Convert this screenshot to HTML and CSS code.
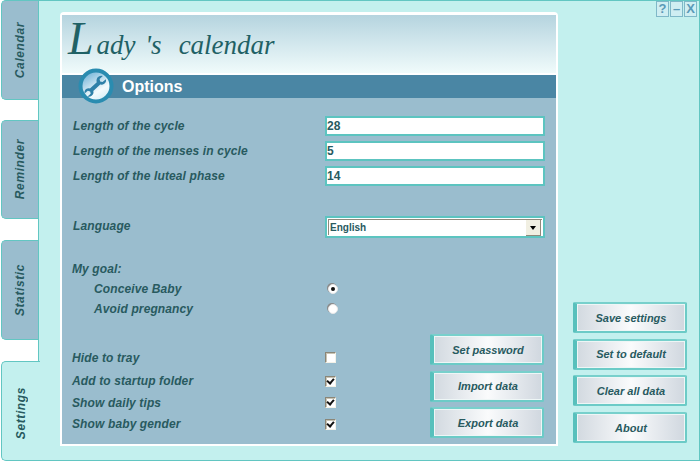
FILE: index.html
```html
<!DOCTYPE html>
<html lang="en">
<head>
    <meta charset="UTF-8">
    <title>Lady's calendar - Options</title>
    <link rel="stylesheet" href="styles.css">
</head>
<body>

<div class="window">
    <div class="tabs">
        <div class="tab"><span>Calendar</span></div>
        <div class="tab"><span>Reminder</span></div>
        <div class="tab"><span>Statistic</span></div>
        <div class="tab active"><span>Settings</span></div>
    </div>

    <div class="main">
        <div class="panel">
            <div class="logo"><span class="logo-cap">L</span>ady <span class="logo-s">'s</span><span class="logo-word">calendar</span></div>
            <div class="bar">
                <svg class="bar-icon" width="36" height="36" viewBox="0 0 36 36">
                    <defs>
                        <linearGradient id="disc" x1="0.1" y1="0" x2="0.7" y2="1">
                            <stop offset="0" stop-color="#5fa9d2"/>
                            <stop offset="0.7" stop-color="#f4fbfd"/>
                            <stop offset="1" stop-color="#d4edf6"/>
                        </linearGradient>
                    </defs>
                    <circle cx="18" cy="18" r="15.5" fill="url(#disc)" stroke="#2a8cb0" stroke-width="4"/>
                    <path transform="translate(3.500 4) scale(.84)" d="M29 8.500l-4 3.500-2.800-.8-.7-2.800 3.800-3.600c-3.200-.8-6.500 1-7.300 4-.3 1.200-.2 2.300 .2 3.300l-8.200 7.600c-2.800-.8-5.600 .7-6.300 3.300-.2 .9-.2 1.700 0 2.500l3.800-3.200 2.800 .8 .6 2.700-3.700 3.400c3 .8 6-.8 6.900-3.500 .3-1.100 .3-2.100-.1-3.100l8.300-7.700c3 .7 6-.9 6.800-3.700 .2-.9 .2-1.800-.1-2.700z" fill="#2f80a8"/>
                </svg>
                <span class="bar-title">Options</span>
            </div>

            <div class="form">
                <div class="field">
                    <label>Length of the cycle</label>
                    <input class="text-input" type="text" value="28">
                </div>
                <div class="field">
                    <label>Length of the menses in cycle</label>
                    <input class="text-input" type="text" value="5">
                </div>
                <div class="field">
                    <label>Length of the luteal phase</label>
                    <input class="text-input" type="text" value="14">
                </div>

                <div class="field language">
                    <label>Language</label>
                    <div class="select">
                        <div class="select-inner">
                            <span>English</span>
                            <span class="select-btn"></span>
                        </div>
                    </div>
                </div>

                <div class="goal">
                    <div class="goal-title">My goal:</div>
                    <div class="goal-row">
                        <label>Conceive Baby</label>
                        <span class="radio on"></span>
                    </div>
                    <div class="goal-row">
                        <label>Avoid pregnancy</label>
                        <span class="radio"></span>
                    </div>
                </div>

                <div class="lower">
                    <div class="checks">
                        <div class="check-row"><label>Hide to tray</label><span class="check"></span></div>
                        <div class="check-row second"><label>Add to startup folder</label><span class="check on"></span></div>
                        <div class="check-row"><label>Show daily tips</label><span class="check on"></span></div>
                        <div class="check-row"><label>Show baby gender</label><span class="check on"></span></div>
                    </div>
                    <div class="btn-stack">
                        <button class="btn">Set password</button>
                        <button class="btn">Import data</button>
                        <button class="btn">Export data</button>
                    </div>
                </div>
            </div>
        </div>

        <div class="side">
            <div class="win-btns">
                <span class="win-btn">?</span>
                <span class="win-btn">&#8211;</span>
                <span class="win-btn">X</span>
            </div>
            <div class="btn-stack">
                <button class="btn">Save settings</button>
                <button class="btn">Set to default</button>
                <button class="btn">Clear all data</button>
                <button class="btn">About</button>
            </div>
        </div>
    </div>
</div>

</body>
</html>
```

FILE: styles.css
```css
body {
    margin: 0;
    font-family: "Liberation Sans", Arial, sans-serif;
    font-size: 12px;
    font-weight: bold;
    font-style: italic;
    color: #285a5f;
    background-color: #fff;
}
.window {
    display: flex;
    width: 700px;
    height: 461px;
    overflow: hidden;
}

/* left tabs */
.tabs {
    width: 38px;
    display: flex;
    flex-direction: column;
    gap: 20px;
    flex: none;
}
.tab {
    height: 100px;
    margin-left: 1px;
    box-sizing: border-box;
    display: flex;
    align-items: center;
    justify-content: center;
    background-color: #9abdce;
    border: 1px solid #62c6c2;
    border-right: none;
    border-radius: 5px 0 0 5px;
    letter-spacing: 0.6px;
}
.tab:nth-child(2) {
    height: 99px;
    margin-bottom: 1px;
}
.tab:nth-child(3) {
    margin-bottom: 1px;
}
.tab span {
    writing-mode: vertical-rl;
    transform: rotate(180deg);
}
.tab.active {
    position: relative;
    margin-right: -2px;
    padding-top: 4px;
    background-color: #c3f0ee;
    z-index: 1;
}

/* main area */
.main {
    flex: 1;
    display: flex;
    box-sizing: border-box;
    padding: 11px 0 14px 21px;
    background-color: #c3f0ee;
    border: 1px solid #62c6c2;
}
.panel {
    width: 498px;
    box-sizing: border-box;
    flex: none;
    border: 2px solid #fff;
    border-top-width: 3px;
    border-radius: 4px 4px 0 0;
    background-color: #9abdce;
    display: flex;
    flex-direction: column;
}
.logo {
    height: 58px;
    padding-left: 6px;
    font-family: "Liberation Serif", serif;
    font-size: 27px;
    font-weight: normal;
    line-height: 60px;
    color: #1f6165;
    background: linear-gradient(#b5d4df, #f0fbfb);
    border-bottom: 2px solid #fff;
}
.logo-cap {
    font-size: 46px;
    line-height: 0;
    margin-right: 3px;
}
.logo-s {
    margin-left: 3px;
}
.logo-word {
    margin-left: 17px;
}
.bar {
    height: 23px;
    display: flex;
    align-items: center;
    background-color: #4a86a4;
    padding-left: 16px;
    gap: 8px;
}
.bar-icon {
    margin: -7px 0 -5px 0;
}
.bar-title {
    color: #fff;
    font-size: 16px;
    font-style: normal;
}

/* form */
.form {
    flex: 1;
    padding: 15px 12px 0 11px;
    letter-spacing: 0.12px;
}
.field {
    display: grid;
    grid-template-columns: 252px 220px;
    align-items: center;
    height: 25px;
}
.text-input {
    width: 100%;
    height: 20px;
    box-sizing: border-box;
    margin: 0;
    padding: 0;
    border: 2px solid #5cc4c0;
    background-color: #fff;
    font-family: "Liberation Sans", Arial, sans-serif;
    font-size: 12px;
    font-weight: bold;
    color: #285a5f;
    outline: none;
}
.language {
    margin-top: 28px;
    height: 22px;
}
.language label {
    margin-top: -2px;
}
.select {
    box-sizing: border-box;
    height: 22px;
    border: 2px solid #5cc4c0;
    background-color: #fff;
    padding: 1px;
    font-style: normal;
    font-size: 10px;
    letter-spacing: 0;
}
.select-inner {
    height: 100%;
    box-sizing: border-box;
    display: flex;
    align-items: center;
    justify-content: space-between;
    padding-left: 1px;
    border-top: 1px solid #8f8a7c;
    border-left: 1px solid #8f8a7c;
}
.select-btn {
    width: 14px;
    height: 15px;
    margin-right: 1px;
    position: relative;
    background-color: #f1efe2;
    border-right: 1px solid #8f8a7c;
    border-bottom: 1px solid #8f8a7c;
}
.select-btn::after {
    content: "";
    position: absolute;
    left: 4px;
    top: 6px;
    border: 3px solid transparent;
    border-top: 4px solid #000;
    border-bottom: none;
}
.goal {
    margin-top: 21px;
}
.goal-title {
    height: 20px;
    line-height: 20px;
    margin-left: -1px;
}
.goal-row {
    display: flex;
    align-items: center;
    height: 20px;
    padding-left: 21px;
}
.goal-row label {
    width: 232px;
}
.radio {
    width: 10px;
    height: 10px;
    margin-left: 2px;
    box-sizing: border-box;
    display: flex;
    align-items: center;
    justify-content: center;
    border-radius: 50%;
    background-color: #fff;
    border: 1px solid #e8e8e8;
    box-shadow: -1px -1px 0 #8a8a8a;
}
.radio.on::after {
    content: "";
    width: 4px;
    height: 4px;
    border-radius: 50%;
    background-color: #111;
}
.lower {
    margin-top: 15px;
    display: flex;
    justify-content: space-between;
}
.checks {
    padding-top: 13px;
}
.check-row {
    display: flex;
    align-items: center;
    height: 21.5px;
    margin-left: -1px;
}
.check-row.second {
    margin-top: 2px;
}
.check-row label {
    width: 253px;
}
.check {
    width: 11px;
    height: 11px;
    box-sizing: border-box;
    position: relative;
    background-color: #fff;
    border: 1px solid;
    border-color: #8a8678 #f4f2e8 #f4f2e8 #8a8678;
    box-shadow: inset 1px 1px 0 #c8c4b4;
}
.check.on::after {
    content: "";
    position: absolute;
    left: 2px;
    top: 0;
    width: 3px;
    height: 5px;
    border: solid #111;
    border-width: 0 2px 2px 0;
    transform: rotate(40deg);
}

/* buttons */
.btn-stack {
    display: flex;
    flex-direction: column;
    gap: 5.67px;
}
.btn {
    width: 114px;
    height: 31px;
    padding: 0;
    box-sizing: border-box;
    border: 2px solid #6ccbc7;
    border-left: 4px solid #58c0bc;
    border-top-color: #78d0cc;
    border-radius: 2px;
    background: linear-gradient(90deg, #d2d9e0, #fafbfc 50%, #d0d7df);
    box-shadow: inset 0 0 0 1px #eef6f6;
    font-family: "Liberation Sans", Arial, sans-serif;
    font-size: 11px;
    font-weight: bold;
    font-style: italic;
    color: #285a5f;
}

/* right column */
.side {
    flex: 1;
    display: flex;
    flex-direction: column;
    justify-content: space-between;
    align-items: flex-end;
    padding: 0 12px 3px 0;
    margin-top: -11px;
}
.win-btns {
    display: flex;
    gap: 1px;
    margin-right: -10px;
}
.win-btn {
    width: 13px;
    height: 16px;
    box-sizing: border-box;
    border: 1px solid #7fb8c8;
    background-color: #cfeef2;
    color: #5a9ab8;
    font-size: 13px;
    font-style: normal;
    line-height: 14px;
    text-align: center;
}
```
